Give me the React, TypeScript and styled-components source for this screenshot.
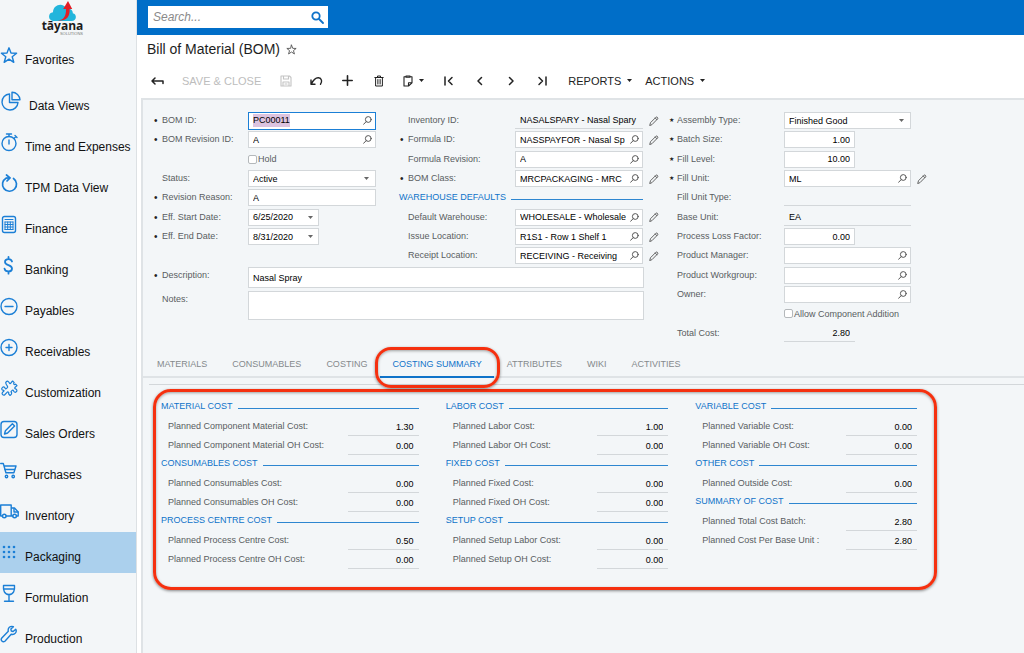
import React from 'react';
import styled, { createGlobalStyle, css } from 'styled-components';

const blue = '#0f73c9';
const panel = '#f3f6f8';
const line = '#d3d7da';

const GlobalStyle = createGlobalStyle`
  *, *::before, *::after { box-sizing: border-box; }
  body { margin: 0; background: #fff; font-family: "Liberation Sans", Arial, sans-serif; font-size: 9px; color: #111; }
  button, input, select, textarea { font: inherit; color: inherit; margin: 0; padding: 0; border: 0; background: none; outline: none; border-radius: 0; }
  button { cursor: pointer; }
  svg { display: block; flex: none; }
`;

/* ---------- shell ---------- */

const Shell = styled.div`
  display: flex;
  height: 100vh;
  overflow: hidden;
`;

const Sidebar = styled.aside`
  flex: none;
  width: 137px;
  background: ${panel};
  border-right: 1px solid #dde1e4;
  overflow: hidden;
`;

const Main = styled.main`
  flex: 1;
  min-width: 0;
  display: flex;
  flex-direction: column;
`;

const Brand = styled.div`
  height: 35px;
  padding: 1px 11px 0 0;
  display: grid;
  justify-items: center;
  align-content: start;
`;

const BrandName = styled.strong`
  font: 700 12px/12px "Open Sans", "Noto Sans", sans-serif;
  color: #1b1b1b;
  margin-top: -3px;
`;

const BrandSub = styled.span`
  font-size: 4px;
  line-height: 4px;
  color: #777;
  justify-self: end;
  margin-right: 42px;
`;

const NavItem = styled.a<{ $active?: boolean; $wide?: boolean }>`
  display: flex;
  align-items: center;
  gap: ${p => (p.$wide ? 8 : 6)}px;
  height: 41px;
  font-size: 12px;
  color: #111;
  text-decoration: none;
  white-space: nowrap;
  background: ${p => (p.$active ? '#abd0ed' : 'transparent')};
  svg { color: #1b7fd6; width: ${p => (p.$wide ? 21 : 19)}px; height: ${p => (p.$wide ? 21 : 19)}px; }
  span { margin-top: 8px; }
  &:first-child { margin-bottom: 5px; }
`;

const TopBar = styled.header`
  flex: none;
  height: 35px;
  background: #006ec8;
  padding: 6px 11px 0;
`;

const Search = styled.form`
  display: flex;
  align-items: center;
  width: 180px;
  height: 22px;
  padding: 0 4px 0 5px;
  background: #fff;
  input { flex: 1; min-width: 0; font-size: 12px; font-style: italic; }
  input::placeholder { color: #8a8a8a; opacity: 1; }
`;

const TitleRow = styled.div`
  flex: none;
  display: flex;
  align-items: center;
  gap: 6px;
  height: 28px;
  padding-left: 10px;
  color: #555;
  h1 { margin: 0; font-size: 14px; font-weight: 400; line-height: 18px; color: #1e1e1e; }
`;

const Toolbar = styled.div`
  flex: none;
  display: flex;
  align-items: center;
  height: 35px;
  padding-left: 5px;
`;

const IconButton = styled.button<{ $faded?: boolean }>`
  display: flex;
  align-items: center;
  justify-content: center;
  width: 31px;
  height: 24px;
  color: ${p => (p.$faded ? '#c4c4c4' : '#222')};
`;

const CopyButton = styled(IconButton)`
  width: 39px;
  gap: 6px;
`;

const TextButton = styled.button<{ $faded?: boolean }>`
  display: flex;
  align-items: center;
  gap: 6px;
  height: 24px;
  padding: 0 2px 0 11px;
  font-size: 11px;
  white-space: nowrap;
  color: ${p => (p.$faded ? '#bdbdbd' : '#222')};
  ${p => p.$faded && css`padding: 0 9px 0 9px;`}
`;

const Content = styled.div`
  flex: 1;
  min-height: 0;
  margin-left: 4px;
  border-top: 2px solid #dfe3e6;
  border-left: 2px solid #dfe3e6;
  background: ${panel};
  overflow: hidden;
`;

/* ---------- form ---------- */

const Form = styled.form`
  display: flex;
  align-items: flex-start;
  gap: 6px;
  padding: 11px 0 0 10px;
`;

const LeftBlock = styled.div`
  flex: none;
`;

const Columns = styled.div`
  display: flex;
  gap: 23px;
`;

const Column = styled.div<{ $label: number; $control: number }>`
  display: grid;
  grid-template-columns: 9px ${p => p.$label}px ${p => p.$control}px auto;
  align-content: start;
`;

const Row = styled.div`
  display: grid;
  grid-column: 1 / -1;
  grid-template-columns: subgrid;
  align-items: center;
  height: 19px;
  &:nth-child(3n) { height: 20px; }
`;

const Marker = styled.span<{ $star?: boolean }>`
  font-size: ${p => (p.$star ? 6 : 10)}px;
  line-height: 17px;
  color: #222;
  padding-left: 1px;
`;

const Label = styled.label`
  color: #595d61;
  white-space: nowrap;
  line-height: 17px;
`;

const Box = styled.div<{ $short?: boolean; $plain?: boolean; $focus?: boolean }>`
  display: flex;
  align-items: center;
  width: ${p => (p.$short ? '71px' : '100%')};
  height: 17px;
  border: 1px solid ${p => (p.$focus ? '#1b7fd6' : line)};
  background: #fff;
  ${p => p.$focus && css`height: 18px;`}
  ${p => p.$plain && css`border-width: 0 0 1px; padding: 0 1px; background: transparent;`}
`;

const Input = styled.input<{ $right?: boolean }>`
  flex: 1;
  width: 0;
  min-width: 0;
  height: 15px;
  padding: 0 0 0 4px;
  color: #000;
  ${p => p.$right && css`text-align: right; padding: 0 4px 0 0;`}
`;

const Chosen = styled.mark`
  flex: none;
  margin-left: 4px;
  line-height: 13px;
  background: #dcc3df;
  color: #000;
`;

const SelectBox = styled(Box)`
  display: grid;
  align-items: center;
  > * { grid-area: 1 / 1; }
  select { appearance: none; height: 15px; width: 100%; padding-left: 4px; color: #000; }
  svg { justify-self: end; margin-right: 6px; pointer-events: none; }
`;

const SmallButton = styled.button`
  display: flex;
  align-items: center;
  justify-content: center;
  width: 16px;
  height: 15px;
  color: #555;
`;

const EditButton = styled(SmallButton)`
  margin-left: 3px;
`;

const Check = styled.label`
  display: flex;
  align-items: center;
  gap: 1px;
  grid-column: 3 / -1;
  color: #595d61;
  white-space: nowrap;
  input { appearance: none; width: 9px; height: 9px; border: 1px solid #b4b8bb; border-radius: 2px; background: #fff; }
`;

const SectionTitle = styled.h2`
  display: flex;
  align-items: center;
  gap: 5px;
  grid-column: 1 / 4;
  margin: 0;
  height: 17px;
  font-size: 9px;
  font-weight: 400;
  line-height: 17px;
  color: ${blue};
  white-space: nowrap;
  &::after { content: ''; flex: 1; height: 1px; margin-top: 3px; background: #2d86d0; }
`;

const WideRow = styled.div`
  display: grid;
  grid-template-columns: 9px 86px 396px;
  margin-top: 2px;
  & + & { margin-top: 3px; }
`;

const WideInput = styled.input`
  height: 21px;
  border: 1px solid ${line};
  background: #fff;
  padding: 0 4px;
  color: #000;
`;

const Notes = styled.textarea`
  height: 29px;
  border: 1px solid ${line};
  background: #fff;
  padding: 4px;
  resize: none;
`;

/* ---------- tabs and costing ---------- */

const Tabs = styled.div`
  display: flex;
  gap: 1px;
  height: 27px;
  margin-top: 8px;
  padding-left: 2px;
  border-bottom: 2px solid #dfe3e6;
`;

const Tab = styled.button<{ $active?: boolean }>`
  position: relative;
  height: 27px;
  padding: 0 12px;
  color: ${p => (p.$active ? blue : '#85898c')};
  border-bottom: 2px solid ${p => (p.$active ? blue : 'transparent')};
  white-space: nowrap;
`;

const callout = css`
  border: 3px solid #f5300f;
  box-shadow: 0 1px 3px rgba(0, 0, 0, 0.45), inset 0 1px 3px rgba(0, 0, 0, 0.35);
`;

const TabCallout = styled.span`
  position: absolute;
  inset: -4px -6px -12px -5px;
  border-radius: 16px;
  pointer-events: none;
  ${callout}
`;

const TabPanel = styled.section`
  margin: 6px 0 0 6px;
  border-top: 1px solid ${line};
`;

const CostGrid = styled.div`
  display: grid;
  grid-template-columns: 258fr 223fr 222fr;
  column-gap: 27px;
  margin: 4px 87px 0 4px;
  padding: 6px 17px 18px 5px;
  border-radius: 18px;
  ${callout}
`;

const CostGroup = styled.div`
  ${SectionTitle} { margin-bottom: 2px; }
`;

const CostColumn = styled.div`
  display: flex;
  flex-direction: column;
`;

const CostRow = styled.div`
  display: flex;
  align-items: flex-start;
  justify-content: space-between;
  height: 19px;
  padding-left: 7px;
  label { line-height: 19px; }
`;

const CostValue = styled.input`
  width: 71px;
  height: 19px;
  padding: 1px 5px 0 0;
  text-align: right;
  color: #000;
  border-bottom: 1px solid ${line};
`;

/* ---------- drawings ---------- */

type DrawProps = { children: React.ReactNode; w?: number; h?: number; box?: string; sw?: number };
const Draw = ({ children, w = 19, h = 19, box = '0 0 19 19', sw = 1.4 }: DrawProps) => (
  <svg width={w} height={h} viewBox={box} fill="none" stroke="currentColor" strokeWidth={sw} strokeLinecap="round" strokeLinejoin="round" aria-hidden="true">
    {children}
  </svg>
);

const dots = [4, 9, 14];

const navIcons: Record<string, React.ReactNode> = {
  Favorites: <Draw><path d="M9 1.800l2 5.300 5.600.2-4.400 3.500 1.600 5.500L9 13.100l-4.800 3.200 1.600-5.500L1.400 7.300l5.600-.2z" /></Draw>,
  'Data Views': <Draw box="0 0 21 21" w={21} h={21}><path d="M9.500 3A8 8 0 1 0 18 11.500H9.500z" /><path d="M12 1.200v7.600h8A8 8 0 0 0 12 1.200z" /></Draw>,
  'Time and Expenses': <Draw><circle cx="9" cy="10.500" r="7" /><path d="M9 3.500V1M6.500 1h5M9 7v4M14 5.500l2-2M15 2.500l2 2" /></Draw>,
  'TPM Data View': <Draw sw={1.7}><path d="M13.500 4.500A7 7 0 1 1 6 4.200L9.500 3.800" /><path d="M6.500 1l3.500 2.800L7 7" /></Draw>,
  Finance: <Draw><rect x="2.500" y="1.500" width="13" height="16" rx="2" /><path d="M5 4.500h8M5 7h8M5 9.500h8M5 12h8M5 14.500h8M5 7v7.500M7.700 7v7.500M10.300 7v7.500M13 7v7.500" strokeWidth="1" /></Draw>,
  Banking: <Draw sw={1.8}><path d="M12 5.500C11.500 3.900 10.200 3.200 8.500 3.200 6.300 3.200 5 4.300 5 6c0 4 7 2.300 7 6.500 0 1.900-1.500 3-3.600 3-2.100 0-3.600-1-3.900-2.800M8.500 1v2.200M8.500 15.500v2.200" /></Draw>,
  Payables: <Draw><circle cx="9" cy="9.500" r="8" /><path d="M5 9.500h8" /></Draw>,
  Receivables: <Draw><circle cx="9" cy="9.500" r="8" /><path d="M6 9.500h6M9 6.500v6" /></Draw>,
  Customization: <Draw sw={1.2}><path d="M6.200 5.200c-1.500-1.800.8-4 2.400-2.400.8.8.6 1.600 1.400 1.800.9 0 1.600-2 2.600-2.600l1.600 1.700c-1.200 1.300 0 2.600 1.400 1.400L17 6.600c-.8 1-2.300 1.500-2.300 2.600.2.800 1.300.4 1.900 1.300 1.200 1.800-1.200 3.600-2.600 2.200-.6-.7-.4-1.400-1.100-1.700-.8 0-1.300 1.100-2 1.800 1.600 1.200.4 3-.8 3.700l-1.500-1.600c.8-1.500-.6-2.600-1.800-1.300L5 15.500c-1.600 1.600-4-.6-2.400-2.200l1.500-1.400c-.5-.9-1.500-.5-2.100-1.300C1 8.900 3.300 7 4.700 8.500c.5.700.5 1.300 1.100 1.400.9-.2 1.500-1.200 1.900-1.900-.2-1-1-1.800-1.500-2.800z" /></Draw>,
  'Sales Orders': <Draw><rect x="1" y="1.500" width="16" height="16" rx="3" /><path d="M4.500 14l.9-3.200 7-7 2.200 2.200-7 7z" /></Draw>,
  Purchases: <Draw><path d="M.7 2.500h2.600l2.600 9.300h8L16 5H4" /><path d="M5 8.500h9.500" /><circle cx="6.500" cy="15.500" r="1.200" /><circle cx="13.200" cy="15.500" r="1.200" /></Draw>,
  Inventory: <Draw><path d="M2.500 14H.7V3h10.500v11H6M11.200 6h3.300l3.700 4v4h-1.700M12.800 14h-1.600" /><circle cx="4.300" cy="14" r="1.800" /><circle cx="14.600" cy="14" r="1.800" /><path d="M14 6.500V10h4" /></Draw>,
  Packaging: <Draw>{dots.map(y => dots.map(x => <circle key={`${x}-${y}`} cx={x} cy={y} r="1.300" fill="currentColor" stroke="none" />))}</Draw>,
  Formulation: <Draw><path d="M3.500 1.500h11c.5 4.800-1 9-5.500 9s-6-4.200-5.500-9zM3.500 5h11M9 10.500V17M4.500 17.300h9" /></Draw>,
  Production: <Draw><path d="M15.800 4.200l-2.700 2.300-1.800-.5-.4-1.900 2.500-2.400C10.200.6 7.500 3 8.300 6.300L1.800 13c-1.700 2 .9 4.900 3.100 3.200l6.300-6.900c3.600.8 6-2.300 4.600-5.100z" /></Draw>,
};

const Caret = ({ color = '#222' }: { color?: string }) => (
  <svg width="5" height="3" viewBox="0 0 5 3" aria-hidden="true"><path d="M0 0h5L2.500 3z" fill={color} /></svg>
);

const Lens = () => (
  <Draw w={9} h={9} box="0 0 9 9" sw={1}><circle cx="5.300" cy="3.500" r="2.900" /><path d="M3.200 5.600L.6 8.300" /></Draw>
);

const Pencil = () => (
  <Draw w={10} h={10} box="0 0 10 10" sw={0.9}><path d="M.8 9.200l.7-2.500L7 1.200c.8-.8 2.400.7 1.700 1.600L3.200 8.400zM6.200 2l1.700 1.700" /></Draw>
);

const Logo = () => (
  <svg width="30" height="22" viewBox="0 0 30 22" aria-hidden="true">
    <path d="M6 20C-.5 20-.3 11.500 5 11.300 5 3.500 15 .8 18.300 7.500c4-.6 6.700 1.600 6.500 4.800 4.300.5 4.300 7.700-1.300 7.700z" fill="#22b5dc" />
    <path d="M10 19.500c6-.6 8.200-4.600 8-11.500h-2.800L20 0l4.200 8h-2.600c.4 7.500-3 12.300-11.600 11.500z" fill="#e31e26" />
  </svg>
);

/* ---------- field pieces ---------- */

const fieldId = (name: string) => name.toLowerCase().replace(/[^a-z0-9]+/g, '-');

type FieldProps = {
  label: string;
  value?: string;
  mark?: string;
  kind?: 'text' | 'lookup' | 'select' | 'date' | 'plain';
  short?: boolean;
  right?: boolean;
  edit?: boolean;
  focus?: boolean;
};

function Field({ label, value = '', mark, kind = 'text', short, right, edit, focus }: FieldProps) {
  const id = fieldId(label);
  return (
    <Row>
      <Marker $star={mark === '★'}>{mark}</Marker>
      <Label htmlFor={id}>{label}:</Label>
      {kind === 'select' ? (
        <SelectBox>
          <select id={id} defaultValue={value}><option>{value}</option></select>
          <Caret color="#666" />
        </SelectBox>
      ) : (
        <Box $short={short} $plain={kind === 'plain'} $focus={focus}>
          {focus && <Chosen>{value}</Chosen>}
          <Input id={id} defaultValue={focus ? '' : value} $right={right} readOnly={kind === 'plain'} />
          {kind === 'lookup' && <SmallButton type="button" aria-label={`Look up ${label}`}><Lens /></SmallButton>}
          {kind === 'date' && <SmallButton type="button" aria-label={`Choose ${label}`}><Caret color="#666" /></SmallButton>}
        </Box>
      )}
      {edit && <EditButton type="button" aria-label={`Edit ${label}`}><Pencil /></EditButton>}
    </Row>
  );
}

const costColumns: { title: string; rows: [string, string][] }[][] = [
  [
    { title: 'MATERIAL COST', rows: [['Planned Component Material Cost:', '1.30'], ['Planned Component Material OH Cost:', '0.00']] },
    { title: 'CONSUMABLES COST', rows: [['Planned Consumables Cost:', '0.00'], ['Planned Consumables OH Cost:', '0.00']] },
    { title: 'PROCESS CENTRE COST', rows: [['Planned Process Centre Cost:', '0.50'], ['Planned Process Centre OH Cost:', '0.00']] },
  ],
  [
    { title: 'LABOR COST', rows: [['Planned Labor Cost:', '1.00'], ['Planned Labor OH Cost:', '0.00']] },
    { title: 'FIXED COST', rows: [['Planned Fixed Cost:', '0.00'], ['Planned Fixed OH Cost:', '0.00']] },
    { title: 'SETUP COST', rows: [['Planned Setup Labor Cost:', '0.00'], ['Planned Setup OH Cost:', '0.00']] },
  ],
  [
    { title: 'VARIABLE COST', rows: [['Planned Variable Cost:', '0.00'], ['Planned Variable OH Cost:', '0.00']] },
    { title: 'OTHER COST', rows: [['Planned Outside Cost:', '0.00']] },
    { title: 'SUMMARY OF COST', rows: [['Planned Total Cost Batch:', '2.80'], ['Planned Cost Per Base Unit :', '2.80']] },
  ],
];

const tabs = ['MATERIALS', 'CONSUMABLES', 'COSTING', 'COSTING SUMMARY', 'ATTRIBUTES', 'WIKI', 'ACTIVITIES'];

export default function App() {
  return (
    <Shell>
      <GlobalStyle />
      <Sidebar>
        <Brand>
          <Logo />
          <BrandName>tāyana</BrandName>
          <BrandSub>SOLUTIONS</BrandSub>
        </Brand>
        <nav>
          {Object.keys(navIcons).map(name => (
            <NavItem key={name} href="#" $active={name === 'Packaging'} $wide={name === 'Data Views'}>
              {navIcons[name]}
              <span>{name}</span>
            </NavItem>
          ))}
        </nav>
      </Sidebar>

      <Main>
        <TopBar>
          <Search>
            <input type="search" placeholder="Search..." aria-label="Search" />
            <Draw w={13} h={13} box="0 0 13 13" sw={1.800}><g stroke={blue}><circle cx="5" cy="5" r="3.700" /><path d="M8 8l4 4" /></g></Draw>
          </Search>
        </TopBar>

        <TitleRow>
          <h1>Bill of Material (BOM)</h1>
          <Draw w={11} h={11} box="0 0 18 18" sw={1.500}><path d="M9 1.800l2 5.300 5.600.2-4.400 3.500 1.600 5.500L9 13.100l-4.800 3.200 1.600-5.500L1.400 7.300l5.600-.2z" /></Draw>
        </TitleRow>

        <Toolbar>
          <IconButton aria-label="Back"><Draw w={13} h={10} box="0 0 13 10" sw={1.500}><path d="M4 2L1 5l3 3M1 5h11v2.500" /></Draw></IconButton>
          <TextButton $faded>SAVE &amp; CLOSE</TextButton>
          <IconButton $faded aria-label="Save"><Draw w={12} h={12} box="0 0 12 12" sw={1.100}><path d="M1 1h8.500L11 2.500V11H1zM3.500 1v3h5V1M3 11V7h6v4M5 9h2" /></Draw></IconButton>
          <IconButton aria-label="Undo"><Draw w={13} h={10} box="0 0 13 10" sw={1.400}><path d="M1 4v4.200h4M1.500 7.800C3.500 3.500 6 1.500 8.500 1.700c3.200.3 4 4 2 6.500" /></Draw></IconButton>
          <IconButton aria-label="Add"><Draw w={11} h={11} box="0 0 11 11" sw={1.600}><path d="M5.500.8v9.400M.8 5.500h9.400" /></Draw></IconButton>
          <IconButton aria-label="Delete"><Draw w={10} h={12} box="0 0 10 12" sw={1}><path d="M.8 2.500h8.400M3.500 2.300V1h3v1.300M1.600 2.500V11h6.800V2.500" /><path d="M3.600 4.500V9M5 4.500V9M6.400 4.500V9" strokeWidth="0.7" /></Draw></IconButton>
          <CopyButton aria-label="Copy"><Draw w={10} h={12} box="0 0 10 12" sw={1.100}><path d="M2.500 1.800H1V11h4.500L9 7.800v-6H7.500M3 1h4v1.200H3zM5.500 11V7.800H9" /></Draw><Caret /></CopyButton>
          <IconButton aria-label="First"><Draw w={10} h={10} box="0 0 10 10" sw={1.500}><path d="M1 1v8M8 1.500L4.500 5 8 8.500" /></Draw></IconButton>
          <IconButton aria-label="Previous"><Draw w={6} h={10} box="0 0 6 10" sw={1.500}><path d="M4.500 1.500L1 5l3.500 3.500" /></Draw></IconButton>
          <IconButton aria-label="Next"><Draw w={6} h={10} box="0 0 6 10" sw={1.500}><path d="M1.500 1.500L5 5 1.500 8.500" /></Draw></IconButton>
          <IconButton aria-label="Last"><Draw w={10} h={10} box="0 0 10 10" sw={1.500}><path d="M9 1v8M2 1.500L5.500 5 2 8.500" /></Draw></IconButton>
          <TextButton>REPORTS<Caret /></TextButton>
          <TextButton>ACTIONS<Caret /></TextButton>
        </Toolbar>

        <Content>
          <Form>
            <LeftBlock>
              <Columns>
                <Column $label={86} $control={128}>
                  <Field label="BOM ID" mark="•" value="PC00011" kind="lookup" focus />
                  <Field label="BOM Revision ID" mark="•" value="A" kind="lookup" />
                  <Row><Check><input type="checkbox" />Hold</Check></Row>
                  <Field label="Status" value="Active" kind="select" />
                  <Field label="Revision Reason" mark="•" value="A" />
                  <Field label="Eff. Start Date" mark="•" value="6/25/2020" kind="date" short />
                  <Field label="Eff. End Date" mark="•" value="8/31/2020" kind="date" short />
                </Column>
                <Column $label={107} $control={128}>
                  <Field label="Inventory ID" value="NASALSPARY - Nasal Spary" kind="plain" edit />
                  <Field label="Formula ID" mark="•" value="NASSPAYFOR - Nasal Sp" kind="lookup" edit />
                  <Field label="Formula Revision" value="A" kind="lookup" />
                  <Field label="BOM Class" mark="•" value="MRCPACKAGING - MRC" kind="lookup" edit />
                  <Row><SectionTitle>WAREHOUSE DEFAULTS</SectionTitle></Row>
                  <Field label="Default Warehouse" value="WHOLESALE - Wholesale" kind="lookup" edit />
                  <Field label="Issue Location" value="R1S1 - Row 1 Shelf 1" kind="lookup" edit />
                  <Field label="Receipt Location" value="RECEIVING - Receiving" kind="lookup" edit />
                </Column>
              </Columns>
              <WideRow>
                <Marker>•</Marker>
                <Label htmlFor="description">Description:</Label>
                <WideInput id="description" defaultValue="Nasal Spray" />
              </WideRow>
              <WideRow>
                <Marker />
                <Label htmlFor="notes">Notes:</Label>
                <Notes id="notes" />
              </WideRow>
            </LeftBlock>
            <Column $label={107} $control={127}>
              <Field label="Assembly Type" mark="★" value="Finished Good" kind="select" />
              <Field label="Batch Size" mark="★" value="1.00" short right />
              <Field label="Fill Level" mark="★" value="10.00" short right />
              <Field label="Fill Unit" mark="★" value="ML" kind="lookup" edit />
              <Field label="Fill Unit Type" kind="plain" />
              <Field label="Base Unit" value="EA" kind="plain" />
              <Field label="Process Loss Factor" value="0.00" short right />
              <Field label="Product Manager" kind="lookup" />
              <Field label="Product Workgroup" kind="lookup" />
              <Field label="Owner" kind="lookup" />
              <Row><Check><input type="checkbox" />Allow Component Addition</Check></Row>
              <Field label="Total Cost" value="2.80" kind="plain" short right />
            </Column>
          </Form>

          <Tabs role="tablist">
            {tabs.map(name => (
              <Tab key={name} role="tab" $active={name === 'COSTING SUMMARY'} aria-selected={name === 'COSTING SUMMARY'}>
                {name}
                {name === 'COSTING SUMMARY' && <TabCallout />}
              </Tab>
            ))}
          </Tabs>

          <TabPanel>
            <CostGrid>
              {costColumns.map((groups, i) => (
                <CostColumn key={i}>
                  {groups.map(group => (
                    <CostGroup key={group.title}>
                      <SectionTitle>{group.title}</SectionTitle>
                      {group.rows.map(([name, amount]) => (
                        <CostRow key={name}>
                          <Label htmlFor={fieldId(name)}>{name}</Label>
                          <CostValue id={fieldId(name)} defaultValue={amount} readOnly />
                        </CostRow>
                      ))}
                    </CostGroup>
                  ))}
                </CostColumn>
              ))}
            </CostGrid>
          </TabPanel>
        </Content>
      </Main>
    </Shell>
  );
}
